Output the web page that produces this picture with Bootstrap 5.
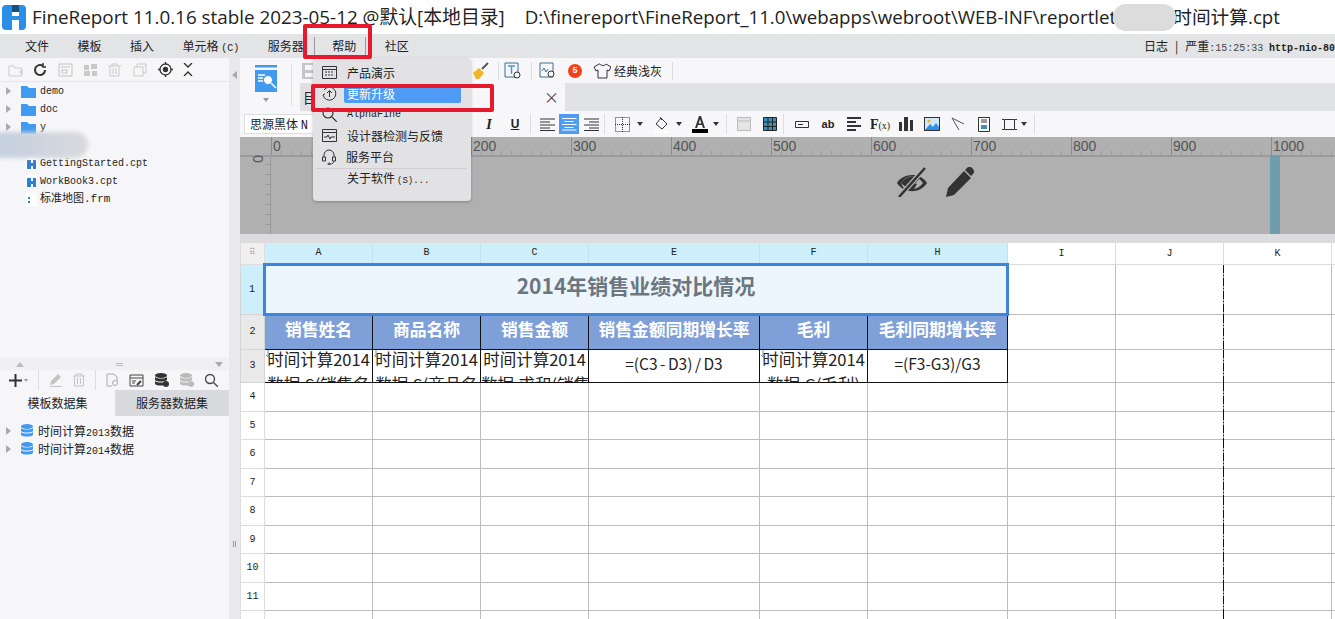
<!DOCTYPE html>
<html lang="zh">
<head>
  <meta charset="UTF-8">
  <title>FineReport</title>
  <link href="https://cdn.jsdelivr.net/npm/bootstrap@5.3.3/dist/css/bootstrap.min.css" rel="stylesheet">
  <style>
    html, body { height: 100%; overflow: hidden; }
    body { font-family: "Noto Sans CJK SC", "Liberation Sans", sans-serif; font-size: 12px; color: #222; background: #fff; position: relative; }
    svg { display: block; flex: none; }
    .fr-mono { font-family: "Liberation Mono", "Noto Sans CJK SC", monospace; }

    .fr-title { height: 34px; flex: none; padding-left: 2px; font-family: "Open Sans", "Noto Sans CJK SC", sans-serif; font-size: 18.84px; color: #222; white-space: nowrap; overflow: hidden; }
    .fr-title-text { margin-left: 6px; }
    .fr-path { margin-left: 20px; font-size: 18.7px; }
    .fr-gap { display: inline-block; width: 57px; }
    .fr-menubar { height: 24px; flex: none; background: #e3e4e6; padding-left: 25px; gap: 28.5px; white-space: nowrap; overflow: hidden; }
    .fr-menubar .fr-c { font-size: 10px; font-family: "Liberation Mono", monospace; }
    .fr-help { position: relative; }
    .fr-help::before, .fr-help::after { content: ""; position: absolute; top: 0; bottom: 0; width: 1px; background: #9a9a9c; }
    .fr-help::before { left: -18px; }
    .fr-help::after { right: -10px; }
    .fr-log { margin-left: auto; font-size: 12px; white-space: nowrap; width: 191px; overflow: hidden; }
    .fr-bar { margin: 0 7px; }
    .fr-log .fr-t { font-size: 10px; color: #444; }
    .fr-log b { font-weight: 700; font-size: 10px; margin-left: 3px; }
    .fr-main { min-height: 0; }

    .fr-left { width: 229px; flex: none; background: #f6f6f8; }
    .fr-divider { width: 11px; flex: none; background: #e9e9eb; }
    .fr-tri-l { width: 0; height: 0; border: 4px solid transparent; border-right: 5px solid #aaa; border-left: 0; margin: 13px 0 0 3px; }
    .fr-grip { margin: 462px 0 0 4px; width: 3px; height: 6px; border-left: 1px solid #999; border-right: 1px solid #999; }
    .fr-tools-l { height: 24px; padding-left: 8px; background: #f6f6f8; border-bottom: 1px solid #e6e6e8; }
    .fr-tools-l > div { width: 25px; }
    .fr-tree { height: 276px; font-size: 10px; }
    .fr-node { height: 18px; white-space: nowrap; }
    .fr-tri { width: 0; height: 0; border: 4px solid transparent; border-left: 5px solid #aaa; border-right: 0; margin: 0 10px 0 6px; }
    .fr-file { padding-left: 26px; }
    .fr-file > span { margin-left: 3px; }
    .fr-node-cjk { font-size: 11px; }
    .fr-split { height: 12px; background: #f0f0f2; padding: 0 6px 0 16px; }
    .fr-up { width: 0; border: 4px solid transparent; border-bottom: 5px solid #bbb; border-top: 0; }
    .fr-dn { width: 0; border: 4px solid transparent; border-top: 5px solid #aaa; border-bottom: 0; }
    .fr-bars { width: 7px; height: 3px; border-top: 1px solid #bbb; border-bottom: 1px solid #bbb; }
    .fr-tools-d { height: 20px; padding-left: 9px; background: #f6f6f8; gap: 10px; }
    .fr-tabs { height: 26px; background: #f6f6f8; font-size: 12px; }
    .fr-tabs > div { width: 115px; }
    .fr-tabs .fr-off { background: #d9dadd; width: 114px; }
    .fr-sep { width: 1px; height: 20px; background: #ddd; flex: none; }
    .fr-dsets { padding-top: 6px; }
    .fr-dsets .fr-node { font-size: 12px; }
    .fr-dsets .fr-tri { margin-right: 9px; }
    .fr-dsets span { margin-left: 4px; }
    .fr-dsets small { font-size: 10px; font-family: "Liberation Mono", monospace; }

    .fr-head { height: 53px; background: #f7f7f9; }
    .fr-bigicon { width: 60px; flex: none; padding: 7px 0 0 15px; position: relative; }
    .fr-bigsep { position: absolute; left: 51px; top: 6px; width: 1px; height: 42px; background: #e0e0e2; }
    .fr-caret { display: block; width: 0; border: 3.5px solid transparent; border-top: 4px solid #999; border-bottom: 0; margin: 6px 0 0 8px; }
    .fr-head-r { flex: 1; min-width: 0; }
    .fr-row1 { height: 25px; padding-left: 2px; }
    .fr-row1 .fr-sep { height: 18px; }
    .fr-save { margin-right: 154px; }
    .fr-s1 { margin: 0 5px 0 8px; }
    .fr-s2 { margin: 0 7px 0 9px; }
    .fr-badge5 { width: 14px; height: 14px; border-radius: 50%; background: #f4401a; color: #fff; font-size: 9px; font-weight: 700; margin-left: 11px; flex: none; font-family: "Liberation Sans", sans-serif; }
    .fr-shirt { margin-left: 11px; }
    .fr-skin { margin-left: 3px; }
    .fr-s4 { margin-left: 10px; }
    .fr-row2 { height: 28px; background: #e1e2e4; }
    .fr-tab0 { width: 100px; background: #e0e0e2; font-size: 14px; padding-left: 3px; }
    .fr-tab { width: 165px; background: #f7f7f9; padding-right: 6px; font-size: 15px; color: #444; }

    .fr-ftool { height: 26px; background: #f7f7f9; white-space: nowrap; }
    .fr-font { width: 226px; margin: 0 6px 0 4px; height: 20px; background: #fff; border: 1px solid #ddd; padding-left: 5px; font-size: 12px; line-height: 18px; flex: none; }
    .fr-ftool .fr-i { height: 26px; flex: none; }
    .fr-w22 { width: 22px; }
    .fr-w24 { width: 24px; }
    .fr-w26 { width: 26px; }
    .fr-w28 { width: 28px; }
    .fr-w30 { width: 30px; }
    .fr-on svg { background: #4d9bf5; width: 20px; height: 20px; padding: 3px 2.5px; }
    .fr-dcaret { width: 0; border: 3.5px solid transparent; border-top: 4px solid #333; border-bottom: 0; margin-right: 5px; flex: none; }
    .fr-ftool .fr-sep { height: 20px; margin: 0 2px; }
    .fr-serif { font-family: "Liberation Serif", serif; font-size: 14px; font-weight: 700; font-style: italic; }
    .fr-under { font-family: "Liberation Sans", sans-serif; font-weight: 700; font-size: 12px; }
    .fr-ab { font-family: "Liberation Sans", sans-serif; font-weight: 700; font-size: 11px; }
    .fr-fx { font-family: "Liberation Serif", serif; font-weight: 700; font-size: 14px; }
    .fr-fx small { font-size: 10px; font-weight: 400; }
    .fr-first { margin-left: 3px; }

    .fr-ruler { height: 20px; background: #b0b0b0; border-bottom: 2px solid #9b9b9b; padding-left: 31px; overflow: hidden; font-size: 14px; color: #555; font-family: "Liberation Sans", sans-serif; }
    .fr-rmark { width: 100px; flex: none; border-left: 1px solid #8c8c8c; padding-left: 1px; line-height: 18px; background: repeating-linear-gradient(90deg, transparent 0 9px, #9a9a9a 9px 10px) left bottom / 100% 4px no-repeat; }
    .fr-canvas { height: 77px; background: #b0b0b0; position: relative; }
    .fr-vruler { width: 31px; flex: none; border-right: 1px solid #999; background: repeating-linear-gradient(0deg, transparent 0 9px, #9a9a9a 9px 10px) right top / 5px 100% no-repeat; }
    .fr-vzero { transform: rotate(90deg); font-size: 14px; color: #555; line-height: 14px; width: 14px; margin: -2px 0 0 11px; font-family: "Liberation Sans", sans-serif; }
    .fr-canvas-icons { margin-left: 625px; padding-top: 10px; gap: 18px; }
    .fr-guide { position: absolute; left: 1030px; top: -2px; bottom: 0; width: 10px; background: #6f9dab; }
    .fr-strip { height: 9px; background: #dcdcde; }

    .fr-sheet { table-layout: fixed; border-collapse: collapse; width: 1204px; }
    .fr-sheet td, .fr-sheet th { border: 1px solid #bdbdbd; padding: 0; text-align: center; overflow: hidden; white-space: nowrap; font-weight: 400; }
    .fr-sheet .fr-colh { height: 21px; background: #cdeefb; border-color: #bfe2f0; font-family: "Liberation Mono", monospace; font-size: 10px; border-top: 0; }
    .fr-sheet .fr-colh.fr-plain { background: #fff; border-color: #ddd; }
    .fr-sheet .fr-corner { background: #f0f0f0; border-color: #ddd; border-top: 0; color: #999; font-size: 9px; line-height: 9px; }
    .fr-sheet .fr-rowh { background: #e9e9e9; border-color: #d4d4d4; font-family: "Liberation Mono", monospace; font-size: 10px; }
    .fr-sheet .fr-rowh.fr-a { background: #cdeefb; }
    .fr-sheet .fr-rowh.fr-w { background: #fff; border-color: #ddd; }
    .fr-sheet .fr-head1 { background: #edf6fd; border: 3px solid #3c85dc; font-size: 21px; font-weight: 700; color: #6c7680; padding-bottom: 6px; }
    .fr-sheet .fr-th { background: #7f9fd9; color: #fff; font-size: 16.8px; font-weight: 700; border-color: #111; padding-bottom: 4px; }
    .fr-sheet .fr-td { border-color: #111; font-size: 16.5px; position: relative; }
    .fr-sheet .fr-td.fr-fml { font-size: 15.5px; word-spacing: -1px; padding-bottom: 3px; }
    .fr-clip { height: 32px; overflow: hidden; line-height: 19px; white-space: normal; }
    .fr-clip .fr-l2 { display: block; margin-top: 6px; white-space: nowrap; }
    .fr-arrow { position: absolute; left: 0; top: 0; }
    .fr-sheet td.fr-page { position: relative; overflow: visible; }
    .fr-page::after { content: ""; position: absolute; right: -1px; top: 0; bottom: -1px; width: 1px; background: repeating-linear-gradient(180deg, #111 0 8px, #999 8px 10px, #111 10px 11px, #999 11px 13px); }

    .fr-pop { position: absolute; left: 313px; top: 58px; width: 158px; height: 143px; background: #e2e2e4; border-radius: 4px; box-shadow: 0 1px 3px rgba(0,0,0,.25); padding-top: 4px; z-index: 5; }
    .fr-mi { height: 21px; white-space: nowrap; }
    .fr-mi > svg { margin-left: 9px; }
    .fr-mi > span { margin-left: 7px; line-height: 18px; padding: 0 3px; flex: 1; margin-right: 10px; border-radius: 2px; }
    .fr-mi .fr-sel { background: #4d9bf5; color: #fff; }
    .fr-mi .fr-noi { margin-left: 31px; }
    .fr-mi .fr-alpha { font-size: 10px; }
    .fr-mi .fr-about { font-size: 9px; margin-left: 2px; }
    .fr-hr { height: 1px; background: #cfcfd1; margin: 1px 5px 0 3px; }
    .fr-redbox { position: absolute; border: 4px solid #e8192c; border-radius: 2px; z-index: 6; }
    .fr-red1 { left: 303px; top: 24px; width: 69px; height: 35px; }
    .fr-red2 { left: 311px; top: 84px; width: 183px; height: 28px; }
    .fr-blur1 { position: absolute; left: 1113px; top: 4px; width: 63px; height: 27px; background: #dcdcdc; border-radius: 13px; z-index: 4; }
    .fr-blur2 { position: absolute; left: -10px; top: 132px; width: 98px; height: 26px; background: linear-gradient(90deg, #c3cfe0, #d9d9dc); border-radius: 13px; filter: blur(2px); z-index: 4; }
  </style>
</head>
<body class="d-flex flex-column">

<!-- title -->
<div class="fr-title d-flex align-items-center">
  <svg width="24" height="25" viewBox="0 0 24 25"><rect width="24" height="25" rx="4" fill="#2b8fe8"/><path d="M10 0h7v7h-7z" fill="#17507f"/><path d="M10 7h7v4h-7zM10 15h7v10h-7z" fill="#fff"/></svg>
  <span class="fr-title-text">FineReport 11.0.16 stable 2023-05-12 @默认[本地目录]</span>
  <span class="fr-path">D:\finereport\FineReport_11.0\webapps\webroot\WEB-INF\reportlet<span class="fr-gap"></span>时间计算.cpt</span>
</div>

<!-- menu bar -->
<div class="fr-menubar d-flex align-items-center">
  <span>文件</span><span>模板</span><span>插入</span><span>单元格 <span class="fr-c">(C)</span></span><span>服务器</span><span class="fr-help">帮助</span><span>社区</span>
  <span class="fr-log">日志<span class="fr-bar">|</span>严重<span class="fr-mono fr-t">:15:25:33</span> <b class="fr-mono">http-nio-80</b></span>
</div>

<div class="fr-main d-flex flex-grow-1">
  <!-- left panel -->
  <div class="fr-left">
    <div class="fr-tools-l d-flex align-items-center">
      <div><svg width="16" height="14" viewBox="0 0 16 14" fill="none" stroke="#ccc"><path d="M1 3h5l1 2h7v8H1zM11 9h4M13 7v4"/></svg></div>
      <div><svg width="14" height="14" viewBox="0 0 14 14" fill="none" stroke="#333" stroke-width="2"><path d="M12 7a5 5 0 1 1-2-4"/><path d="M10 0v4h3" stroke-width="1.5"/></svg></div>
      <div><svg width="15" height="14" viewBox="0 0 15 14" fill="none" stroke="#c4c4c4"><path d="M1 1h13v12H1zM3 4h9M4 7h5v3H4z"/></svg></div>
      <div><svg width="15" height="14" viewBox="0 0 15 14" fill="#c9c9c9"><path d="M1 2h5v5H1zM8 1h6v5H8zM1 8h6v5H1zM9 8h5v5H9z"/></svg></div>
      <div><svg width="13" height="14" viewBox="0 0 13 14" fill="none" stroke="#c9c9c9"><path d="M0 3h13M4 3V1h5v2M2 3v10h9V3M5 5v6M8 5v6"/></svg></div>
      <div><svg width="14" height="14" viewBox="0 0 14 14" fill="none" stroke="#c9c9c9"><path d="M1 4h9v9H1zM4 4V1h9v9h-3"/></svg></div>
      <div><svg width="15" height="15" viewBox="0 0 15 15" fill="none" stroke="#333" stroke-width="1.3"><circle cx="7.5" cy="7.5" r="5.5"/><circle cx="7.5" cy="7.5" r="2" fill="#333"/><path d="M7.5 0v2M7.5 13v2M0 7.5h2M13 7.5h2"/></svg></div>
      <div><svg width="10" height="13" viewBox="0 0 10 13" fill="none" stroke="#333" stroke-width="1.4"><path d="M1 0l4 4 4-4M1 13l4-4 4 4"/></svg></div>
    </div>
    <div class="fr-tree fr-mono">
      <div class="fr-node d-flex align-items-center"><i class="fr-tri"></i><svg width="15" height="13" viewBox="0 0 15 13"><path d="M0 1h6l2 2h7v10H0z" fill="#3f9af0"/></svg><span class="ms-1">demo</span></div>
      <div class="fr-node d-flex align-items-center"><i class="fr-tri"></i><svg width="15" height="13" viewBox="0 0 15 13"><path d="M0 1h6l2 2h7v10H0z" fill="#3f9af0"/></svg><span class="ms-1">doc</span></div>
      <div class="fr-node d-flex align-items-center"><i class="fr-tri"></i><svg width="15" height="13" viewBox="0 0 15 13"><path d="M0 1h6l2 2h7v10H0z" fill="#3f9af0"/></svg><span class="ms-1">y</span></div>
      <div class="fr-node"></div>
      <div class="fr-node fr-file d-flex align-items-center"><svg width="11" height="13" viewBox="0 0 11 13"><rect width="11" height="13" fill="#fff"/><path d="M1 3h4v3h2V3h3v9H7V9H5v3H1z" fill="#2f7fd6"/></svg><span>GettingStarted.cpt</span></div>
      <div class="fr-node fr-file d-flex align-items-center"><svg width="11" height="13" viewBox="0 0 11 13"><rect width="11" height="13" fill="#fff"/><path d="M1 3h4v3h2V3h3v9H7V9H5v3H1z" fill="#2f7fd6"/></svg><span>WorkBook3.cpt</span></div>
      <div class="fr-node fr-file d-flex align-items-center"><svg width="11" height="13" viewBox="0 0 11 13"><rect width="11" height="13" fill="#fff"/><path d="M2 4h2v2H2zM2 8h2v2H2z" fill="#2f7fd6"/></svg><span class="fr-node-cjk">标准地图<span class="fr-mono">.frm</span></span></div>
    </div>
    <div class="fr-split d-flex align-items-center justify-content-between"><i class="fr-up"></i><i class="fr-bars"></i><i class="fr-dn"></i></div>
    <div class="fr-tools-d d-flex align-items-center">
      <svg width="19" height="13" viewBox="0 0 19 13"><path d="M0 5.5h13v2H0zM5.5 0h2v13h-2z" fill="#333"/><path d="M15 5h4l-2 3z" fill="#999"/></svg>
      <i class="fr-sep"></i>
      <svg width="14" height="14" viewBox="0 0 14 14" fill="#c4c4c4"><path d="M1 12l1-4 7-7 3 3-7 7zM1 13h12v1H1z"/></svg>
      <svg width="12" height="14" viewBox="0 0 12 14" fill="none" stroke="#c4c4c4"><path d="M0 3h12M3 3V1h6v2M1.5 3v10h9V3M4.5 5v6M7.5 5v6"/></svg>
      <i class="fr-sep"></i>
      <svg width="13" height="14" viewBox="0 0 13 14" fill="none" stroke="#aaa"><path d="M1 1h7l3 3v4M1 1v12h5"/><circle cx="9" cy="10" r="2.5"/></svg>
      <svg width="15" height="13" viewBox="0 0 15 13" fill="none" stroke="#444"><path d="M1 1h13v11H1zM1 4h13M3 7h4M3 9h3"/><path d="M8 11l4-4" stroke-width="2"/></svg>
      <svg width="15" height="14" viewBox="0 0 15 14" fill="#333"><ellipse cx="7" cy="2.5" rx="6" ry="2.5"/><path d="M1 4c2 2 10 2 12 0v3c-2 2-10 2-12 0zM1 8c2 2 10 2 12 0v3c-2 2-10 2-12 0z"/><circle cx="12" cy="11" r="3"/></svg>
      <svg width="15" height="14" viewBox="0 0 15 14" fill="#bbb"><ellipse cx="7" cy="2.5" rx="6" ry="2.5"/><path d="M1 4c2 2 10 2 12 0v3c-2 2-10 2-12 0zM1 8c2 2 10 2 12 0v3c-2 2-10 2-12 0z"/><circle cx="12" cy="11" r="3"/></svg>
      <svg width="14" height="14" viewBox="0 0 14 14" fill="none" stroke="#444" stroke-width="1.3"><circle cx="6" cy="6" r="4.5"/><path d="M9.5 9.5L14 14"/></svg>
    </div>
    <div class="fr-tabs d-flex">
      <div class="d-flex align-items-center justify-content-center">模板数据集</div>
      <div class="fr-off d-flex align-items-center justify-content-center">服务器数据集</div>
    </div>
    <div class="fr-dsets">
      <div class="fr-node d-flex align-items-center"><i class="fr-tri"></i><svg width="14" height="14" viewBox="0 0 14 14" fill="#3f9af0"><ellipse cx="7" cy="2.5" rx="6" ry="2.5"/><path d="M1 4c2 2 10 2 12 0v3c-2 2-10 2-12 0zM1 8c2 2 10 2 12 0v3c-2 2-10 2-12 0z"/></svg><span>时间计算<small>2013</small>数据</span></div>
      <div class="fr-node d-flex align-items-center"><i class="fr-tri"></i><svg width="14" height="14" viewBox="0 0 14 14" fill="#3f9af0"><ellipse cx="7" cy="2.5" rx="6" ry="2.5"/><path d="M1 4c2 2 10 2 12 0v3c-2 2-10 2-12 0zM1 8c2 2 10 2 12 0v3c-2 2-10 2-12 0z"/></svg><span>时间计算<small>2014</small>数据</span></div>
    </div>
  </div>
  <div class="fr-divider"><div class="fr-tri-l"></div><div class="fr-grip"></div></div>

  <!-- designer -->
  <div class="flex-grow-1 overflow-hidden">
    <div class="fr-head d-flex">
      <div class="fr-bigicon">
        <svg width="22" height="27" viewBox="0 0 22 27"><rect width="22" height="2.5" fill="#3f9af0"/><path d="M0 5h22v22H0z" fill="#3f9af0"/><path d="M3 10h7M3 13h5M3 16h5" stroke="#fff" stroke-width="1.3"/><circle cx="13" cy="15" r="4.5" fill="#fff" stroke="#3f9af0"/><path d="M16 18l5 5" stroke="#fff" stroke-width="1.5"/></svg>
        <i class="fr-caret"></i>
        <div class="fr-bigsep"></div>
      </div>
      <div class="fr-head-r">
        <div class="fr-row1 d-flex align-items-center">
          <svg class="fr-save" width="16" height="16" viewBox="0 0 16 16" fill="#c6c6c8"><path d="M0 0h16v16H0z"/><path d="M3 2h10v5H3zM3 10h10v4H3z" fill="#f7f7f9"/></svg>
          <svg width="18" height="18" viewBox="0 0 18 18"><path d="M1 11l6-5 5 5-5 6H4z" fill="#f0b429"/><path d="M10 7l6-6" stroke="#555" stroke-width="2"/></svg>
          <i class="fr-sep fr-s1"></i>
          <svg width="18" height="18" viewBox="0 0 18 18" fill="none" stroke="#3a6d8f"><path d="M1 1h13v14H1z"/><path d="M4 4h7M7.5 4v8" stroke="#3f9af0" stroke-width="1.5"/><circle cx="13" cy="13" r="3" fill="#f7f7f9" stroke="#333"/></svg>
          <i class="fr-sep fr-s2"></i>
          <svg width="18" height="18" viewBox="0 0 18 18" fill="none" stroke="#3a6d8f"><path d="M1 1h13v14H1zM3 9l2-3 2 4 2-3"/><circle cx="12" cy="12" r="3" fill="#f7f7f9" stroke="#333"/></svg>
          <span class="fr-badge5 d-flex align-items-center justify-content-center">5</span>
          <svg class="fr-shirt" width="18" height="18" viewBox="0 0 18 18" fill="none" stroke="#333"><path d="M6 2L1 5l2 4 2-1v8h9V8l2 1 2-4-5-3c-1 2-5 2-6 0z"/></svg>
          <span class="fr-skin">经典浅灰</span>
          <i class="fr-sep fr-s4"></i>
        </div>
        <div class="fr-row2 d-flex">
          <div class="fr-tab0 d-flex align-items-center">目</div>
          <div class="fr-tab d-flex align-items-center justify-content-end">×</div>
        </div>
      </div>
    </div>
    <div class="fr-ftool d-flex align-items-center">
      <div class="fr-font">思源黑体 <span class="fr-mono">N</span></div>
      <div class="fr-i fr-w26 d-flex align-items-center justify-content-center"><span class="fr-serif">I</span></div>
      <div class="fr-i fr-w26 d-flex align-items-center justify-content-center"><u class="fr-under">U</u></div>
      <i class="fr-sep"></i>
      <div class="fr-i fr-w22 fr-first d-flex align-items-center justify-content-center"><svg width="15" height="13" viewBox="0 0 15 13" stroke="#333"><path d="M0 1h15M0 4h10M0 7h15M0 10h10M0 12.5h15"/></svg></div>
      <div class="fr-i fr-w22 fr-on d-flex align-items-center justify-content-center"><svg width="15" height="13" viewBox="0 0 15 13" stroke="#fff"><path d="M0 1h15M3 4h9M0 7h15M3 10h9M0 12.5h15"/></svg></div>
      <div class="fr-i fr-w22 d-flex align-items-center justify-content-center"><svg width="15" height="13" viewBox="0 0 15 13" stroke="#333"><path d="M0 1h15M5 4h10M0 7h15M5 10h10M0 12.5h15"/></svg></div>
      <i class="fr-sep"></i>
      <div class="fr-i fr-w30 d-flex align-items-center justify-content-center"><svg width="15" height="15" viewBox="0 0 15 15" fill="none" stroke="#333" stroke-dasharray="1 1"><path d="M.5.5h14v14H.5zM7.5 0v15M0 7.5h15"/></svg></div>
      <i class="fr-dcaret"></i>
      <div class="fr-i fr-w28 d-flex align-items-center justify-content-center"><svg width="16" height="17" viewBox="0 0 16 17" fill="none" stroke="#333"><path d="M7 2l6 6-5 5-6-5z"/><path d="M6 1l2 3"/><rect y="15" width="14" height="2" fill="#fff" stroke="none"/></svg></div>
      <i class="fr-dcaret"></i>
      <div class="fr-i fr-w26 d-flex flex-column align-items-center justify-content-center"><svg width="16" height="17" viewBox="0 0 16 17"><path d="M7 0h2l4 12h-2l-1-3H6l-1 3H3zM6.7 7.5h2.6L8 3z" fill="#333"/><rect y="13" width="16" height="4" fill="#000"/></svg></div>
      <i class="fr-dcaret"></i>
      <i class="fr-sep"></i>
      <div class="fr-i fr-w30 d-flex align-items-center justify-content-center"><svg width="14" height="14" viewBox="0 0 14 14" fill="#e4e4e4" stroke="#bbb"><path d="M.5.5h13v13H.5zM.5 4h13"/></svg></div>
      <div class="fr-i fr-w22 d-flex align-items-center justify-content-center"><svg width="14" height="14" viewBox="0 0 14 14" fill="#3f8fb8" stroke="#222"><path d="M.5.5h13v13H.5z"/><path d="M.5 5h13M.5 9.5h13M5 .5v13M9.5 .5v13"/></svg></div>
      <i class="fr-sep"></i>
      <div class="fr-i fr-w26 fr-first d-flex align-items-center justify-content-center"><svg width="14" height="7" viewBox="0 0 14 7" fill="none" stroke="#333"><path d="M.5.5h13v6H.5z"/><path d="M3 3.5h5"/></svg></div>
      <div class="fr-i fr-w26 d-flex align-items-center justify-content-center fr-ab">ab</div>
      <div class="fr-i fr-w26 d-flex align-items-center justify-content-center"><svg width="14" height="14" viewBox="0 0 14 14" fill="#333"><path d="M0 0h14v2H0zM0 4h9v2H0zM0 8h14v2H0zM0 12h9v2H0z"/></svg></div>
      <div class="fr-i fr-w26 d-flex align-items-center justify-content-center fr-fx"><span>F<small>(x)</small></span></div>
      <div class="fr-i fr-w26 d-flex align-items-center justify-content-center"><svg width="14" height="14" viewBox="0 0 14 14" fill="#333"><path d="M0 5h3v9H0zM5 0h4v14H5zM11 3h3v11h-3z"/></svg></div>
      <div class="fr-i fr-w26 d-flex align-items-center justify-content-center"><svg width="16" height="14" viewBox="0 0 16 14"><rect width="16" height="14" fill="#333"/><rect x="1" y="1" width="14" height="12" fill="#cfe8fb"/><path d="M1 13l5-6 3 3 3-4 3 4v3z" fill="#2f8fe6"/><circle cx="5" cy="4" r="1.5" fill="#f0b429"/></svg></div>
      <div class="fr-i fr-w26 d-flex align-items-center justify-content-center"><svg width="14" height="14" viewBox="0 0 14 14" fill="none" stroke="#555"><path d="M1 1l12 6M1 1l7 12"/></svg></div>
      <div class="fr-i fr-w26 d-flex align-items-center justify-content-center"><svg width="12" height="15" viewBox="0 0 12 15" fill="#fff" stroke="#333"><path d="M.5.5h11v14H.5z"/><path d="M3 3h6M3 5h6"/><rect x="3" y="8" width="6" height="4" fill="#3f8fb8" stroke="none"/></svg></div>
      <div class="fr-i fr-w24 d-flex align-items-center justify-content-center"><svg width="15" height="15" viewBox="0 0 15 15" fill="none" stroke="#333"><path d="M2.5 2.5h10v10h-10zM0 2.5h2M13 2.5h2M0 12.5h2M13 12.5h2"/></svg></div>
      <i class="fr-dcaret"></i>
      <i class="fr-sep"></i>
    </div>
    <div class="fr-ruler d-flex">
      <div class="fr-rmark">0</div><div class="fr-rmark">100</div><div class="fr-rmark">200</div><div class="fr-rmark">300</div><div class="fr-rmark">400</div><div class="fr-rmark">500</div><div class="fr-rmark">600</div><div class="fr-rmark">700</div><div class="fr-rmark">800</div><div class="fr-rmark">900</div><div class="fr-rmark">1000</div>
    </div>
    <div class="fr-canvas d-flex">
      <div class="fr-vruler"><div class="fr-vzero">0</div></div>
      <div class="fr-canvas-icons d-flex">
        <svg width="32" height="30" viewBox="0 0 32 30"><path d="M1 16C7 6 24 5 31 16 24 27 8 27 1 16z" fill="#333"/><path d="M5 16c2-3 4-5 7-6 5-2 11 0 15 6-3 4-6 5-9 6l3-5c-1-1-4-1-6 2l-5 4c-2-2-4-4-5-7z" fill="#b0b0b0"/><path d="M5 16C10 8 22 8 24 11L15 21C11 21 8 19 5 16z" fill="#333"/><path d="M3 30L29 1" stroke="#b0b0b0" stroke-width="5"/><path d="M3 30L29 1" stroke="#333" stroke-width="2.5"/></svg>
        <svg width="28" height="30" viewBox="0 0 28 30" fill="#333"><path d="M0 30l2-9L18 4l7 7L8 28zM19 3l3-3c2-1 5 1 6 4 0 1 0 2-1 3l-2 2z"/></svg>
      </div>
      <div class="fr-guide"></div>
    </div>
    <div class="fr-strip"></div>

    <table class="fr-sheet">
      <colgroup><col style="width:24px"><col style="width:108px"><col style="width:108px"><col style="width:108px"><col style="width:171px"><col style="width:108px"><col style="width:140px"><col style="width:108px"><col style="width:108px"><col style="width:108px"><col style="width:113px"></colgroup>
      <tr><th class="fr-corner fr-colh">⠿</th><th class="fr-colh">A</th><th class="fr-colh">B</th><th class="fr-colh">C</th><th class="fr-colh">E</th><th class="fr-colh">F</th><th class="fr-colh">H</th><th class="fr-colh fr-plain">I</th><th class="fr-colh fr-plain">J</th><th class="fr-colh fr-plain">K</th><th class="fr-colh fr-plain"></th></tr>
      <tr style="height:50px"><td class="fr-rowh fr-a">1</td><td class="fr-head1" colspan="6">2014年销售业绩对比情况</td><td></td><td class="fr-page"></td><td></td><td></td></tr>
      <tr style="height:35px"><td class="fr-rowh">2</td><td class="fr-th">销售姓名</td><td class="fr-th">商品名称</td><td class="fr-th">销售金额</td><td class="fr-th">销售金额同期增长率</td><td class="fr-th">毛利</td><td class="fr-th">毛利同期增长率</td><td></td><td class="fr-page"></td><td></td><td></td></tr>
      <tr style="height:33px"><td class="fr-rowh">3</td>
        <td class="fr-td"><svg class="fr-arrow" width="6" height="8" viewBox="0 0 6 8" fill="none" stroke="#888"><path d="M3 0v7M1 5l2 2 2-2"/></svg><div class="fr-clip">时间计算2014<span class="fr-l2">数据.S(销售名</span></div></td>
        <td class="fr-td"><svg class="fr-arrow" width="6" height="8" viewBox="0 0 6 8" fill="none" stroke="#888"><path d="M3 0v7M1 5l2 2 2-2"/></svg><div class="fr-clip">时间计算2014<span class="fr-l2">数据.S(商品名</span></div></td>
        <td class="fr-td"><div class="fr-clip">时间计算2014<span class="fr-l2">数据.求和(销售</span></div></td>
        <td class="fr-td fr-fml">=(C3 - D3) / D3</td>
        <td class="fr-td"><svg class="fr-arrow" width="6" height="8" viewBox="0 0 6 8" fill="none" stroke="#888"><path d="M3 0v7M1 5l2 2 2-2"/></svg><div class="fr-clip">时间计算2014<span class="fr-l2">数据.G(毛利)</span></div></td>
        <td class="fr-td fr-fml">=(F3-G3)/G3</td><td></td><td class="fr-page"></td><td></td><td></td></tr>
      <tr style="height:29px"><td class="fr-rowh fr-w">4</td><td></td><td></td><td></td><td></td><td></td><td></td><td></td><td class="fr-page"></td><td></td><td></td></tr>
      <tr style="height:28px"><td class="fr-rowh fr-w">5</td><td></td><td></td><td></td><td></td><td></td><td></td><td></td><td class="fr-page"></td><td></td><td></td></tr>
      <tr style="height:29px"><td class="fr-rowh fr-w">6</td><td></td><td></td><td></td><td></td><td></td><td></td><td></td><td class="fr-page"></td><td></td><td></td></tr>
      <tr style="height:28px"><td class="fr-rowh fr-w">7</td><td></td><td></td><td></td><td></td><td></td><td></td><td></td><td class="fr-page"></td><td></td><td></td></tr>
      <tr style="height:29px"><td class="fr-rowh fr-w">8</td><td></td><td></td><td></td><td></td><td></td><td></td><td></td><td class="fr-page"></td><td></td><td></td></tr>
      <tr style="height:28px"><td class="fr-rowh fr-w">9</td><td></td><td></td><td></td><td></td><td></td><td></td><td></td><td class="fr-page"></td><td></td><td></td></tr>
      <tr style="height:29px"><td class="fr-rowh fr-w">10</td><td></td><td></td><td></td><td></td><td></td><td></td><td></td><td class="fr-page"></td><td></td><td></td></tr>
      <tr style="height:28px"><td class="fr-rowh fr-w">11</td><td></td><td></td><td></td><td></td><td></td><td></td><td></td><td class="fr-page"></td><td></td><td></td></tr>
      <tr style="height:28px"><td class="fr-rowh fr-w"></td><td></td><td></td><td></td><td></td><td></td><td></td><td></td><td class="fr-page"></td><td></td><td></td></tr>
    </table>
  </div>
</div>

<!-- help menu -->
<div class="fr-pop">
  <div class="fr-mi d-flex align-items-center"><svg width="15" height="13" viewBox="0 0 15 13" fill="none" stroke="#333"><path d="M.5.5h14v12H.5zM.5 3.5h14"/><path d="M3 6h9M3 9h9" stroke-dasharray="2 1"/></svg><span>产品演示</span></div>
  <div class="fr-mi d-flex align-items-center"><svg width="15" height="15" viewBox="0 0 15 15" fill="none" stroke="#333"><path d="M2 4a6.5 6.5 0 1 1-1 5M1 9l2-1M7.5 11V5M5 7l2.5-2.5L10 7"/></svg><span class="fr-sel">更新升级</span></div>
  <div class="fr-mi d-flex align-items-center"><svg width="15" height="15" viewBox="0 0 15 15" fill="none" stroke="#333" stroke-width="1.2"><circle cx="6" cy="6" r="5"/><path d="M10 10l5 5"/></svg><span class="fr-mono fr-alpha">AlphaFine</span></div>
  <div class="fr-mi d-flex align-items-center"><svg width="15" height="13" viewBox="0 0 15 13" fill="none" stroke="#333"><path d="M.5.5h14v12H.5zM.5 3.5h14M2 8h3l1-2 2 4 1-2h4"/></svg><span>设计器检测与反馈</span></div>
  <div class="fr-mi d-flex align-items-center"><svg width="14" height="16" viewBox="0 0 14 16" fill="none" stroke="#333"><path d="M2 8V6a5 5 0 0 1 10 0v2M.5 8h3v4h-3zM10.5 8h3v4h-3zM12 12c0 2-2 3-4 3"/><circle cx="7" cy="15" r="1"/></svg><span>服务平台</span></div>
  <div class="fr-hr"></div>
  <div class="fr-mi d-flex align-items-center"><span class="fr-noi">关于软件<span class="fr-mono fr-about">(S)...</span></span></div>
</div>
<div class="fr-redbox fr-red1"></div>
<div class="fr-redbox fr-red2"></div>
<div class="fr-blur1"></div>
<div class="fr-blur2"></div>

<script src="https://cdn.jsdelivr.net/npm/bootstrap@5.3.3/dist/js/bootstrap.bundle.min.js"></script>
</body>
</html>
